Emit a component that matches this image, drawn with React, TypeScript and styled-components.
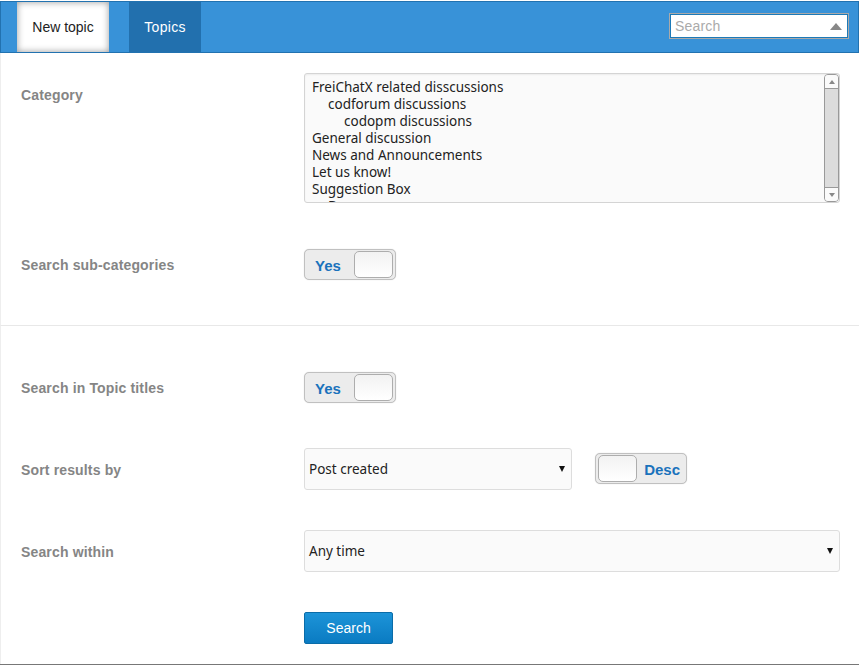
import React from "react"
import styled, { createGlobalStyle } from "styled-components"

const Global = createGlobalStyle`
    html, body { margin: 0; padding: 0; background: #fff; }
    * { box-sizing: border-box; }
`

const Page = styled.div`
    width: 859px;
    height: 665px;
    display: flex;
    flex-direction: column;
    padding-top: 1px;
    border-bottom: 1px solid #777;
    font-family: "Liberation Sans", Arial, sans-serif;
    overflow: hidden;
`

const NavBar = styled.div`
    height: 52px;
    flex-shrink: 0;
    display: flex;
    align-items: stretch;
    justify-content: space-between;
    padding-left: 16px;
    background: #3892d8;
    border: 1px solid #2272b0;
`

const Tabs = styled.div`
    display: flex;
    gap: 20px;
`

const Tab = styled.a<{ $active?: boolean }>`
    display: flex;
    align-items: center;
    justify-content: center;
    width: ${p => (p.$active ? "92px" : "72px")};
    font-size: 14px;
    letter-spacing: ${p => (p.$active ? "0" : "0.3px")};
    color: ${p => (p.$active ? "#222" : "#fff")};
    background: ${p => (p.$active ? "#fff" : "#2270ae")};
    box-shadow: ${p => (p.$active ? "inset 0 0 7px rgba(0,0,0,0.4)" : "none")};
`

const SearchBox = styled.div`
    align-self: flex-start;
    margin: 12px 10px 0 0;
    width: 178px;
    height: 24px;
    display: flex;
    align-items: center;
    justify-content: space-between;
    padding: 0 5px 0 4px;
    background: #fff;
    border: 1px solid #1c7ab8;
    outline: 1px solid #aaa;
    font-size: 14px;
    letter-spacing: 0.2px;
    color: #aaa;
`

const UpArrow = styled.span`
    width: 0;
    height: 0;
    border-left: 6px solid transparent;
    border-right: 6px solid transparent;
    border-bottom: 7px solid #888;
`

const Section = styled.div<{ $top: number; $bottom: number; $divided?: boolean }>`
    padding: ${p => p.$top}px 19px ${p => p.$bottom}px 20px;
    display: flex;
    flex-direction: column;
    flex-grow: ${p => (p.$divided ? 0 : 1)};
    border-left: 1px solid #eee;
    border-bottom: ${p => (p.$divided ? "1px solid #e8e8e8" : "none")};
`

const Row = styled.div<{ $gap?: number; $center?: boolean }>`
    display: flex;
    align-items: ${p => (p.$center ? "center" : "flex-start")};
    margin-bottom: ${p => p.$gap ?? 0}px;
`

const Label = styled.div<{ $pad?: number }>`
    width: 283px;
    flex-shrink: 0;
    padding-top: ${p => p.$pad ?? 0}px;
    font-size: 14px;
    line-height: 16px;
    font-weight: bold;
    letter-spacing: 0.15px;
    color: #858585;
`

const ListBox = styled.div`
    position: relative;
    width: 536px;
    height: 130px;
    padding: 5px 0 0 7px;
    background: #fafafa;
    border: 1px solid #d4d4d4;
    border-radius: 3px;
    box-shadow: inset 0 1px 2px rgba(0,0,0,0.06);
    overflow: hidden;
    font-family: "Noto Sans", sans-serif;
    font-size: 13.5px;
    line-height: 17px;
    color: #222;
`

const Option = styled.div<{ $depth?: number }>`
    padding-left: ${p => (p.$depth ?? 0) * 16}px;
    white-space: nowrap;
`

const ScrollBar = styled.div`
    position: absolute;
    top: 0;
    right: 0;
    bottom: 0;
    width: 15px;
    display: flex;
    flex-direction: column;
    background: #dcdcdc;
    border: 1px solid #999;
    border-radius: 4px;
`

const ScrollButton = styled.div<{ $down?: boolean }>`
    height: 14px;
    display: flex;
    align-items: center;
    justify-content: center;
    background: #fafafa;
    margin-top: ${p => (p.$down ? "auto" : "0")};
    border-top: ${p => (p.$down ? "1px solid #999" : "none")};
    border-bottom: ${p => (p.$down ? "none" : "1px solid #999")};
    border-radius: ${p => (p.$down ? "0 0 3px 3px" : "3px 3px 0 0")};

    &::after {
        content: "";
        border-left: 3.5px solid transparent;
        border-right: 3.5px solid transparent;
        border-top: ${p => (p.$down ? "4px solid #888" : "none")};
        border-bottom: ${p => (p.$down ? "none" : "4px solid #888")};
    }
`

const Toggle = styled.div<{ $flip?: boolean }>`
    width: 92px;
    height: 31px;
    margin-bottom: ${p => (p.$flip ? "1px" : "0")};
    display: flex;
    flex-direction: ${p => (p.$flip ? "row-reverse" : "row")};
    align-items: center;
    justify-content: space-between;
    padding: 1px 2px;
    background: #ececec;
    border: 1px solid #c0c0c0;
    border-radius: 5px;
    box-shadow: 0 0 1px rgba(0,0,0,0.2);
`

const ToggleText = styled.span<{ $flip?: boolean }>`
    font-size: 15px;
    line-height: 17px;
    padding-top: 1px;
    font-weight: bold;
    color: #1a72bc;
    padding-left: ${p => (p.$flip ? "0" : "8px")};
    padding-right: ${p => (p.$flip ? "4px" : "0")};
`

const Knob = styled.span`
    width: 39px;
    height: 27px;
    background: linear-gradient(#f2f2f2, #fff);
    border: 1px solid #adadad;
    border-radius: 5px;
`

const Select = styled.div<{ $width: number }>`
    width: ${p => p.$width}px;
    height: 42px;
    display: flex;
    align-items: center;
    justify-content: space-between;
    padding: 0 6px 0 4px;
    background: #fafafa;
    border: 1px solid #ddd;
    border-radius: 3px;
    font-family: "Noto Sans", sans-serif;
    font-size: 13.5px;
    color: #222;
`

const DownArrow = styled.span`
    width: 0;
    height: 0;
    border-left: 3px solid transparent;
    border-right: 3px solid transparent;
    border-top: 6px solid #111;
`

const SortControls = styled.div`
    display: flex;
    align-items: center;
    gap: 23px;
`

const SearchButton = styled.button`
    width: 89px;
    height: 32px;
    padding: 0;
    font-family: "Liberation Sans", Arial, sans-serif;
    font-size: 14px;
    color: #fff;
    background: linear-gradient(#1d94d8, #0a7bc2);
    border: 1px solid #0a6ca8;
    border-radius: 2px;
`

const ButtonRow = styled.div`
    padding-left: 283px;
`

const categories = [
    { name: "FreiChatX related disscussions", depth: 0 },
    { name: "codforum discussions", depth: 1 },
    { name: "codopm discussions", depth: 2 },
    { name: "General discussion", depth: 0 },
    { name: "News and Announcements", depth: 0 },
    { name: "Let us know!", depth: 0 },
    { name: "Suggestion Box", depth: 0 },
    { name: "Bugs", depth: 1 },
]

export default function App() {
    return (
        <Page>
            <Global />
            <NavBar>
                <Tabs>
                    <Tab $active>New topic</Tab>
                    <Tab>Topics</Tab>
                </Tabs>
                <SearchBox>
                    Search
                    <UpArrow />
                </SearchBox>
            </NavBar>
            <Section $top={20} $bottom={45} $divided>
                <Row $gap={46}>
                    <Label $pad={14}>Category</Label>
                    <ListBox>
                        {categories.map(c => (
                            <Option key={c.name} $depth={c.depth}>{c.name}</Option>
                        ))}
                        <ScrollBar>
                            <ScrollButton />
                            <ScrollButton $down />
                        </ScrollBar>
                    </ListBox>
                </Row>
                <Row $center>
                    <Label>Search sub-categories</Label>
                    <Toggle>
                        <ToggleText>Yes</ToggleText>
                        <Knob />
                    </Toggle>
                </Row>
            </Section>
            <Section $top={46} $bottom={0}>
                <Row $center $gap={45}>
                    <Label>Search in Topic titles</Label>
                    <Toggle>
                        <ToggleText>Yes</ToggleText>
                        <Knob />
                    </Toggle>
                </Row>
                <Row $center $gap={40}>
                    <Label $pad={2}>Sort results by</Label>
                    <SortControls>
                        <Select $width={268}>
                            Post created
                            <DownArrow />
                        </Select>
                        <Toggle $flip>
                            <ToggleText $flip>Desc</ToggleText>
                            <Knob />
                        </Toggle>
                    </SortControls>
                </Row>
                <Row $center $gap={40}>
                    <Label $pad={2}>Search within</Label>
                    <Select $width={536}>
                        Any time
                        <DownArrow />
                    </Select>
                </Row>
                <ButtonRow>
                    <SearchButton>Search</SearchButton>
                </ButtonRow>
            </Section>
        </Page>
    )
}
